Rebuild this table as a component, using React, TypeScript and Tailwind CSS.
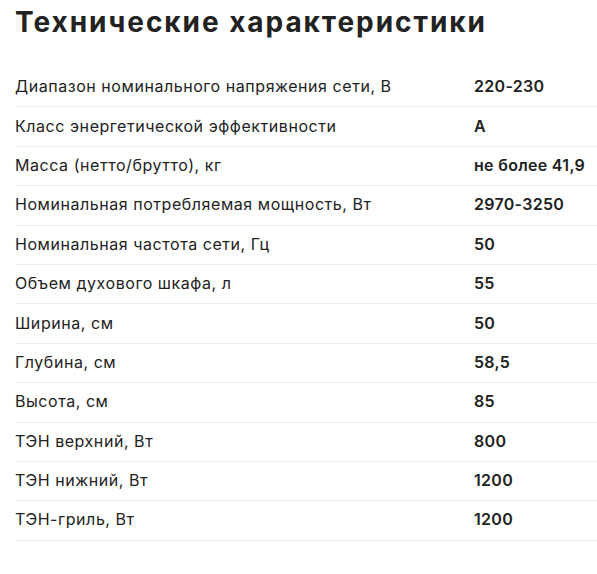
const specs: [string, string][] = [
  ["Диапазон номинального напряжения сети, В", "220-230"],
  ["Класс энергетической эффективности", "A"],
  ["Масса (нетто/брутто), кг", "не более 41,9"],
  ["Номинальная потребляемая мощность, Вт", "2970-3250"],
  ["Номинальная частота сети, Гц", "50"],
  ["Объем духового шкафа, л", "55"],
  ["Ширина, см", "50"],
  ["Глубина, см", "58,5"],
  ["Высота, см", "85"],
  ["ТЭН верхний, Вт", "800"],
  ["ТЭН нижний, Вт", "1200"],
  ["ТЭН-гриль, Вт", "1200"],
];

export default function App() {
  return (
    <div className="w-[597px] h-[574px] bg-white pl-[15px] font-['Inter',sans-serif] text-[#222222]">
      <h2 className="pt-[3px] text-[28px] leading-[38px] font-bold tracking-[1.95px]">
        Технические характеристики
      </h2>
      <div className="mt-[27px]">
        {specs.map(([label, value]) => (
          <div
            key={label}
            className="flex items-center h-[39.4px] border-b border-[#ececec] text-[16px]"
          >
            <span className="w-[459px] shrink-0 tracking-[0.55px] pb-[2px]">{label}</span>
            <span className="font-semibold tracking-[0.3px] pb-[2px]">{value}</span>
          </div>
        ))}
      </div>
    </div>
  );
}
